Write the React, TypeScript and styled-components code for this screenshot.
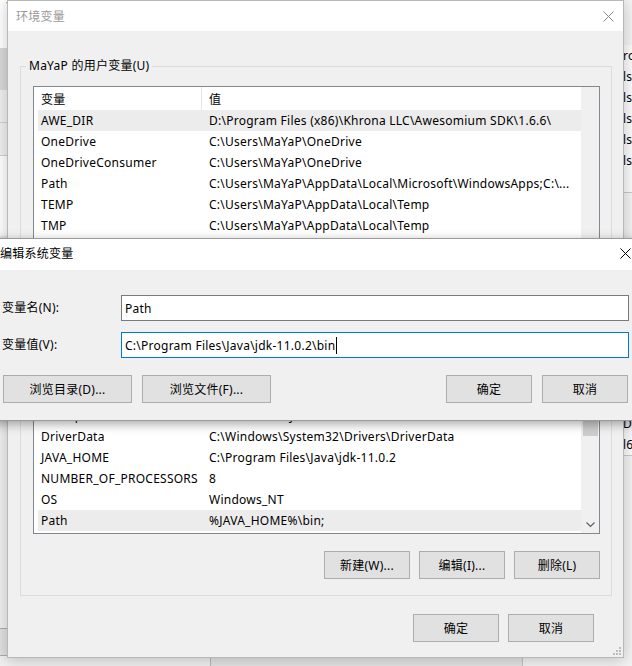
import React from "react";
import styled, { createGlobalStyle } from "styled-components";

const FONT = `"Noto Sans", "Noto Sans CJK SC", sans-serif`;

const Global = createGlobalStyle`
  html, body { margin: 0; padding: 0; background: #f0f0f0; }
  body { width: 632px; height: 666px; overflow: hidden; font-family: ${FONT}; font-size: 12px; letter-spacing: 0.25px; color: #000; }
  * { box-sizing: border-box; }
`;

const Desktop = styled.div`
  position: relative;
  width: 632px;
  height: 666px;
  overflow: hidden;
  background: #e8e8e8;
`;

/* ---------- background windows ---------- */

const BackWindow = styled.div`
  position: absolute;
  left: -200px;
  top: -30px;
  width: 411px;
  height: 720px;
  background: #f0f0f0;
  border-right: 1px solid #b9b9b9;
  display: flex;
  flex-direction: column;
`;

const BackBand = styled.div<{ $h: number; $bg: string; $line?: boolean }>`
  height: ${(p) => p.$h}px;
  background: ${(p) => p.$bg};
  border-bottom: ${(p) => (p.$line ? "1px solid #d0d0d0" : "none")};
  display: flex;
  align-items: center;
  justify-content: flex-end;
  padding-right: 200px;
  overflow: hidden;
`;

const BackGlyph = styled.span`
  font-size: 20px;
  line-height: 20px;
  color: #222;
  margin-right: -4px;
`;

const BackFooter = styled.div`
  margin-top: auto;
  height: 62px;
  display: flex;
  gap: 9px;
  justify-content: flex-end;
  padding-right: 9px;
`;

const BackButton = styled.div<{ $disabled?: boolean }>`
  width: 86px;
  height: 28px;
  border: 1px solid #adadad;
  background: #e1e1e1;
  display: flex;
  align-items: center;
  justify-content: center;
  color: ${(p) => (p.$disabled ? "#a0a0a0" : "#000")};
`;

const MidWindow = styled.div`
  position: absolute;
  left: 211px;
  top: 640px;
  width: 312px;
  height: 60px;
  background: #e4e4e4;
  border-right: 1px solid #c4c4c4;
  display: flex;
  justify-content: flex-end;
  padding: 20px 20px 0 0;
  color: #333;
`;

const RightWindow = styled.div`
  position: absolute;
  left: 523px;
  top: -10px;
  width: 300px;
  height: 700px;
  background: #f3f3f3;
  display: flex;
  flex-direction: column;
  padding-left: 98px;
`;

const PeekList = styled.div<{ $mt: number }>`
  margin-top: ${(p) => p.$mt}px;
  background: #fbfbfb;
  border-bottom: 1px solid #c8c8c8;
  display: flex;
  flex-direction: column;
  padding-left: 2px;
`;

const PeekRow = styled.div`
  height: 21px;
  line-height: 21px;
  white-space: nowrap;
`;

/* ---------- generic window parts ---------- */

const EnvFrame = styled.div`
  position: absolute;
  left: 7px;
  top: 0;
  width: 617px;
  border: 1px solid #b8b8b8;
  background: #f0f0f0;
  box-shadow: 0 2px 14px rgba(0, 0, 0, 0.22);
  display: flex;
  flex-direction: column;
`;

const EditFrame = styled.div`
  position: absolute;
  left: -9px;
  top: 238px;
  width: 658px;
  border: 1px solid #9a9a9a;
  background: #f0f0f0;
  box-shadow: 0 3px 10px rgba(0, 0, 0, 0.35);
  display: flex;
  flex-direction: column;
`;

const TitleBar = styled.div<{ $active?: boolean; $h: number }>`
  height: ${(p) => p.$h}px;
  background: #fff;
  display: flex;
  align-items: center;
  justify-content: space-between;
  padding-left: 8px;
  padding-bottom: ${(p) => (p.$active ? 3 : 0)}px;
  color: ${(p) => (p.$active ? "#000" : "#9a9a9a")};
`;

const CloseBox = styled.div<{ $w: number; $color: string }>`
  width: ${(p) => p.$w}px;
  height: 100%;
  display: flex;
  align-items: center;
  justify-content: center;
  color: ${(p) => p.$color};
`;

const CloseIcon = () => (
  <svg width="11" height="11" viewBox="0 0 11 11">
    <path d="M0.5 0.5 L10.5 10.5 M10.5 0.5 L0.5 10.5" stroke="currentColor" strokeWidth="1" fill="none" />
  </svg>
);

const Button = styled.div<{ $w: number }>`
  width: ${(p) => p.$w}px;
  height: 28px;
  border: 1px solid #adadad;
  background: #e1e1e1;
  display: flex;
  align-items: center;
  justify-content: center;
  white-space: nowrap;
`;

/* ---------- environment window body ---------- */

const EnvBody = styled.div`
  position: relative;
  padding: 35px 11px 15px 12px;
  display: flex;
  flex-direction: column;
`;

const Grip = styled.div`
  position: absolute;
  right: 2px;
  bottom: 2px;
  width: 10px;
  height: 10px;
  display: flex;
`;

const GripIcon = () => (
  <svg width="10" height="10" viewBox="0 0 10 10">
    {[
      [8, 2],
      [5, 5],
      [8, 5],
      [2, 8],
      [5, 8],
      [8, 8],
    ].map(([x, y], i) => (
      <rect key={i} x={x} y={y} width="2" height="2" fill="#bcbcbc" />
    ))}
  </svg>
);

const Group = styled.div<{ $mt?: number }>`
  margin-top: ${(p) => p.$mt ?? 0}px;
  border: 1px solid #dcdcdc;
  padding: 0 11px 16px 12px;
  display: flex;
  flex-direction: column;
`;

const GroupTitle = styled.div`
  align-self: flex-start;
  margin: -9px 0 12px -7px;
  padding: 0 3px;
  line-height: 16px;
  background: #f0f0f0;
`;

const List = styled.div<{ $h: number }>`
  height: ${(p) => p.$h}px;
  border: 1px solid #828790;
  background: #fff;
  display: flex;
  overflow: hidden;
`;

const ListContent = styled.div`
  flex: 1;
  display: flex;
  flex-direction: column;
  overflow: hidden;
  padding-left: 4px;
`;

const Row = styled.div<{ $selected?: boolean; $header?: boolean }>`
  flex: none;
  height: ${(p) => (p.$header ? 23 : 21)}px;
  display: grid;
  grid-template-columns: 164px 1fr;
  align-items: center;
  background: ${(p) => (p.$selected ? "#ececec" : "transparent")};
  white-space: nowrap;
`;

const Cell = styled.div<{ $first?: boolean; $header?: boolean }>`
  height: 100%;
  display: flex;
  align-items: center;
  padding-left: ${(p) => (p.$first ? 3 : 7)}px;
  border-right: ${(p) => (p.$first && p.$header ? "1px solid #e5e5e5" : "none")};
  overflow: hidden;
`;

const ScrollTrack = styled.div`
  width: 18px;
  flex: none;
  background: #f0f0f0;
  display: flex;
  flex-direction: column;
  align-items: center;
`;

const Thumb = styled.div<{ $top: number; $h: number }>`
  margin-top: ${(p) => p.$top}px;
  width: 15px;
  height: ${(p) => p.$h}px;
  background: #cdcdcd;
`;

const ArrowBox = styled.div`
  margin-top: auto;
  height: 17px;
  width: 17px;
  display: flex;
  align-items: center;
  justify-content: center;
  color: #606060;
`;

const ButtonRow = styled.div<{ $mt: number; $pr?: number }>`
  margin-top: ${(p) => p.$mt}px;
  padding-right: ${(p) => p.$pr ?? 0}px;
  display: flex;
  justify-content: flex-end;
  gap: 9px;
`;

/* ---------- edit dialog body ---------- */

const EditBody = styled.div`
  padding: 25px 19px 17px 10px;
  display: flex;
  flex-direction: column;
`;

const FormGrid = styled.div`
  display: grid;
  grid-template-columns: 119px 1fr;
  row-gap: 11px;
  align-items: center;
`;

const Label = styled.div`
  white-space: nowrap;
  margin-top: -2px;
`;

const Input = styled.div<{ $focused?: boolean }>`
  height: 26px;
  border: 1px solid ${(p) => (p.$focused ? "#0078d7" : "#7a7a7a")};
  background: #fff;
  display: flex;
  align-items: center;
  padding-left: 3px;
  white-space: nowrap;
`;

const Caret = styled.span`
  display: inline-block;
  width: 1px;
  height: 17px;
  background: #000;
  margin-left: 1px;
`;

const EditButtons = styled.div`
  margin-top: 17px;
  padding: 0 1px 0 1px;
  display: flex;
  gap: 10px;
`;

const Spacer = styled.div`
  flex: 1;
`;

const DownArrow = () => (
  <svg width="9" height="6" viewBox="0 0 9 6">
    <path d="M0.5 0.5 L4.5 4.5 L8.5 0.5" stroke="currentColor" strokeWidth="1.2" fill="none" />
  </svg>
);

const userVars: [string, string][] = [
  ["AWE_DIR", "D:\\Program Files (x86)\\Khrona LLC\\Awesomium SDK\\1.6.6\\"],
  ["OneDrive", "C:\\Users\\MaYaP\\OneDrive"],
  ["OneDriveConsumer", "C:\\Users\\MaYaP\\OneDrive"],
  ["Path", "C:\\Users\\MaYaP\\AppData\\Local\\Microsoft\\WindowsApps;C:\\..."],
  ["TEMP", "C:\\Users\\MaYaP\\AppData\\Local\\Temp"],
  ["TMP", "C:\\Users\\MaYaP\\AppData\\Local\\Temp"],
];

const sysVars: [string, string][] = [
  ["ComSpec", "C:\\Windows\\system32\\cmd.exe"],
  ["ComSpec", "C:\\Windows\\system32\\cmd.exe"],
  ["ComSpec", "C:\\Windows\\system32\\cmd.exe"],
  ["DriverData", "C:\\Windows\\System32\\Drivers\\DriverData"],
  ["JAVA_HOME", "C:\\Program Files\\Java\\jdk-11.0.2"],
  ["NUMBER_OF_PROCESSORS", "8"],
  ["OS", "Windows_NT"],
  ["Path", "%JAVA_HOME%\\bin;"],
];

const VarList = ({
  height,
  vars,
  selected,
  thumb,
  arrow,
}: {
  height: number;
  vars: [string, string][];
  selected: number;
  thumb?: [number, number];
  arrow?: boolean;
}) => (
  <List $h={height}>
    <ListContent>
      <Row $header>
        <Cell $first $header>变量</Cell>
        <Cell $header>值</Cell>
      </Row>
      {vars.map(([k, v], i) => (
        <Row key={i} $selected={i === selected}>
          <Cell $first>{k}</Cell>
          <Cell>{v}</Cell>
        </Row>
      ))}
    </ListContent>
    <ScrollTrack>
      {thumb && <Thumb $top={thumb[0]} $h={thumb[1]} />}
      {arrow && (
        <ArrowBox>
          <DownArrow />
        </ArrowBox>
      )}
    </ScrollTrack>
  </List>
);

export default function App() {
  return (
    <Desktop>
      <Global />
      <BackWindow>
        <BackBand $h={78} $bg="#ffffff">
          <BackGlyph>\</BackGlyph>
        </BackBand>
        <BackBand $h={42} $bg="#d9d9d9" />
        <BackBand $h={33} $bg="#f0f0f0" $line />
        <BackBand $h={33} $bg="#f0f0f0" $line />
        <BackBand $h={80} $bg="#ffffff" />
        <BackFooter>
          <BackButton>确定</BackButton>
          <BackButton>取消</BackButton>
          <BackButton $disabled>应用(A)</BackButton>
        </BackFooter>
      </BackWindow>

      <MidWindow>›</MidWindow>

      <RightWindow>
        <PeekList $mt={55}>
          <PeekRow>ro</PeekRow>
          <PeekRow>ls</PeekRow>
          <PeekRow>ls</PeekRow>
          <PeekRow>ls</PeekRow>
          <PeekRow>ls</PeekRow>
          <PeekRow>ls</PeekRow>
          <PeekRow />
        </PeekList>
        <PeekList $mt={220}>
          <PeekRow>De</PeekRow>
          <PeekRow>l6</PeekRow>
        </PeekList>
      </RightWindow>

      <EnvFrame>
        <TitleBar $h={30}>
          环境变量
          <CloseBox $w={30} $color="#8a8a8a">
            <CloseIcon />
          </CloseBox>
        </TitleBar>
        <EnvBody>
          <Group>
            <GroupTitle>MaYaP 的用户变量(U)</GroupTitle>
            <VarList height={166} vars={userVars} selected={0} />
            <ButtonRow $mt={10}>
              <Button $w={86}>新建(N)...</Button>
              <Button $w={86}>编辑(E)...</Button>
              <Button $w={86}>删除(D)</Button>
            </ButtonRow>
          </Group>
          <Group $mt={12}>
            <GroupTitle>系统变量(S)</GroupTitle>
            <VarList height={195} vars={sysVars} selected={7} thumb={[70, 26]} arrow />
            <ButtonRow $mt={17}>
              <Button $w={86}>新建(W)...</Button>
              <Button $w={86}>编辑(I)...</Button>
              <Button $w={86}>删除(L)</Button>
            </ButtonRow>
          </Group>
          <ButtonRow $mt={18} $pr={18}>
            <Button $w={86}>确定</Button>
            <Button $w={86}>取消</Button>
          </ButtonRow>
          <Grip>
            <GripIcon />
          </Grip>
        </EnvBody>
      </EnvFrame>

      <EditFrame>
        <TitleBar $active $h={31}>
          编辑系统变量
          <CloseBox $w={46} $color="#000">
            <CloseIcon />
          </CloseBox>
        </TitleBar>
        <EditBody>
          <FormGrid>
            <Label>变量名(N):</Label>
            <Input>Path</Input>
            <Label>变量值(V):</Label>
            <Input $focused>
              C:\Program Files\Java\jdk-11.0.2\bin
              <Caret />
            </Input>
          </FormGrid>
          <EditButtons>
            <Button $w={129}>浏览目录(D)...</Button>
            <Button $w={129}>浏览文件(F)...</Button>
            <Spacer />
            <Button $w={86}>确定</Button>
            <Button $w={86}>取消</Button>
          </EditButtons>
        </EditBody>
      </EditFrame>
    </Desktop>
  );
}
